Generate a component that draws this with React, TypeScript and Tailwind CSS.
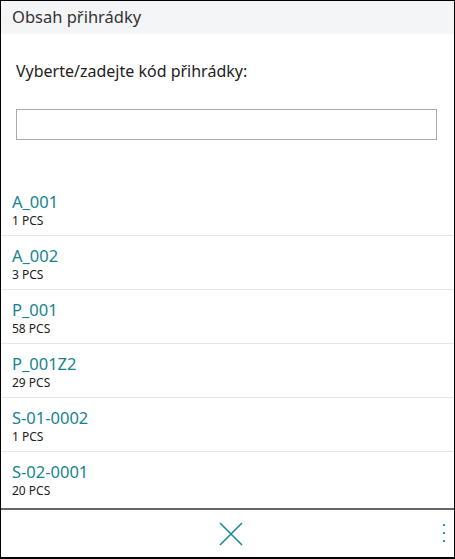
const bins = [
  { code: 'A_001', qty: '1 PCS' },
  { code: 'A_002', qty: '3 PCS' },
  { code: 'P_001', qty: '58 PCS' },
  { code: 'P_001Z2', qty: '29 PCS' },
  { code: 'S-01-0002', qty: '1 PCS' },
  { code: 'S-02-0001', qty: '20 PCS' },
]

export default function App() {
  return (
    <div className="flex h-[559px] w-[455px] flex-col border-x border-t border-b-2 border-black bg-white font-['Noto_Sans',sans-serif]">
      <div className="flex h-[33px] items-center bg-[#f4f5f7] pl-[11px] text-[16.5px] text-[#333]">
        Obsah přihrádky
      </div>
      <div className="px-[15px] pt-[25px]">
        <p className="text-[16px] text-[#222]">Vyberte/zadejte kód přihrádky:</p>
        <input
          type="text"
          className="mt-[26px] block h-[31px] w-[421px] border border-[#aaa] outline-none"
        />
      </div>
      <ul className="mt-[42px] flex-1 overflow-hidden">
        {bins.map((b, i) => (
          <li
            key={b.code}
            className={`flex h-[54px] flex-col justify-center pl-[11px] ${
              i < bins.length - 1 ? 'border-b border-[#e6e6e6]' : ''
            }`}
          >
            <span className="text-[16.5px] leading-[23px] text-[#15848f]">{b.code}</span>
            <span className="text-[12px] leading-[15px] text-[#222]">{b.qty}</span>
          </li>
        ))}
      </ul>
      <div className="relative flex h-[49px] items-center justify-center border-t-2 border-[#666]">
        <svg width="24" height="24" viewBox="0 0 24 24" className="ml-[6px] text-[#1a8a98]">
          <path d="M1 1 L23 23 M23 1 L1 23" stroke="currentColor" strokeWidth="1.6" fill="none" />
        </svg>
        <div className="absolute right-[9px] top-[14px] flex flex-col gap-[6px]">
          <span className="block h-[2px] w-[2px] bg-[#1a8fb0]" />
          <span className="block h-[2px] w-[2px] bg-[#1a8fb0]" />
          <span className="block h-[2px] w-[2px] bg-[#1a8fb0]" />
        </div>
      </div>
    </div>
  )
}
